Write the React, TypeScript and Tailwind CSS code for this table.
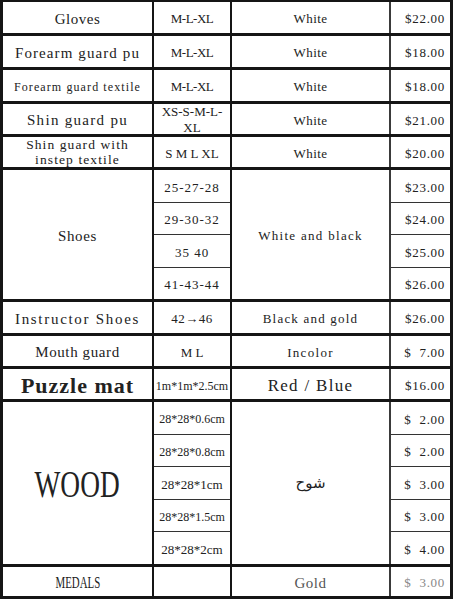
import React from "react";

const serif = "font-['Liberation_Serif','DejaVu_Serif',serif]";

type C = { text: React.ReactNode; cls?: string };

const c1 = "w-[151px] shrink-0 border-r-2 border-[#151515] flex items-center justify-center text-center overflow-hidden";
const c2 = "w-[78px] shrink-0 border-r-2 border-[#151515] flex items-center justify-center text-center overflow-hidden";
const c3 = "w-[159px] shrink-0 border-r-2 border-[#3a3a3a] flex items-center justify-center text-center overflow-hidden";
const c4 = "flex-1 flex items-center justify-end pr-[5px] overflow-hidden";

function Row({ h, a, b, c, d }: { h: string; a: C; b: C; c: C; d: C }) {
  return (
    <div className={`flex ${h} border-b-[3px] border-[#151515]`}>
      <div className={`${c1} ${a.cls ?? "pt-[3px] text-[15px]"}`}>{a.text}</div>
      <div className={`${c2} ${b.cls ?? "pt-[3px] text-[13px]"}`}>{b.text}</div>
      <div className={`${c3} ${c.cls ?? "pt-[3px] text-[13px]"}`}>{c.text}</div>
      <div className={`${c4} ${d.cls ?? "pt-[3px] text-[13px] tracking-[0.7px]"}`}>{d.text}</div>
    </div>
  );
}

function Group({ h, a, b, c, d }: { h: string; a: C; b: C[]; c: C; d: C[] }) {
  return (
    <div className={`flex ${h} border-b-[3px] border-[#151515]`}>
      <div className={`${c1} ${a.cls ?? ""}`}>{a.text}</div>
      <div className="w-[78px] shrink-0 border-r-2 border-[#151515] flex flex-col">
        {b.map((x, i) => (
          <div
            key={i}
            className={`flex-1 flex items-center justify-center whitespace-nowrap pt-[3px] ${i > 0 ? "border-t border-[#333]" : ""} ${x.cls ?? "text-[13px]"}`}
          >
            {x.text}
          </div>
        ))}
      </div>
      <div className={`${c3} ${c.cls ?? ""}`}>{c.text}</div>
      <div className="flex-1 flex flex-col">
        {d.map((x, i) => (
          <div
            key={i}
            className={`flex-1 flex items-center justify-end pr-[5px] pt-[3px] whitespace-pre ${i > 0 ? "border-t border-[#333]" : ""} ${x.cls ?? "text-[13px] tracking-[0.7px]"}`}
          >
            {x.text}
          </div>
        ))}
      </div>
    </div>
  );
}

export default function App() {
  return (
    <div className={`w-[455px] h-[600px] bg-white text-[#222] ${serif}`}>
      <div className="w-[453px] border-l-[3px] border-r-[3px] border-t-2 border-[#151515]">
        <Row
          h="h-[34px]"
          a={{ text: "Gloves", cls: "pt-[3px] text-[15px] tracking-[0.5px]" }}
          b={{ text: "M-L-XL", cls: "pt-[3px] text-[13px] tracking-[-0.5px]" }}
          c={{ text: "White", cls: "pt-[3px] text-[13px] tracking-[0.4px]" }}
          d={{ text: "$22.00" }}
        />
        <Row
          h="h-[34px]"
          a={{ text: "Forearm guard pu", cls: "pt-[3px] text-[15px] tracking-[1.1px]" }}
          b={{ text: "M-L-XL", cls: "pt-[3px] text-[13px] tracking-[-0.5px]" }}
          c={{ text: "White", cls: "pt-[3px] text-[13px] tracking-[0.4px]" }}
          d={{ text: "$18.00" }}
        />
        <Row
          h="h-[34px]"
          a={{ text: "Forearm guard textile", cls: "pt-[3px] text-[12px] tracking-[1.1px] whitespace-nowrap" }}
          b={{ text: "M-L-XL", cls: "pt-[3px] text-[13px] tracking-[-0.5px]" }}
          c={{ text: "White", cls: "pt-[3px] text-[13px] tracking-[0.4px]" }}
          d={{ text: "$18.00" }}
        />
        <Row
          h="h-[33px]"
          a={{ text: "Shin guard pu", cls: "pt-[3px] text-[15px] tracking-[1.3px]" }}
          b={{
            text: (
              <span>
                XS-S-M-L-
                <br />
                XL
              </span>
            ),
            cls: "pt-[1px] text-[13px] leading-[16px]",
          }}
          c={{ text: "White", cls: "pt-[3px] text-[13px] tracking-[0.4px]" }}
          d={{ text: "$21.00" }}
        />
        <Row
          h="h-[33px]"
          a={{
            text: (
              <span>
                Shin guard with
                <br />
                instep textile
              </span>
            ),
            cls: "pt-0 text-[13.5px] leading-[15px] tracking-[1.1px] whitespace-nowrap",
          }}
          b={{ text: "S M L XL", cls: "pt-[3px] text-[13px] whitespace-pre" }}
          c={{ text: "White", cls: "pt-[3px] text-[13px] tracking-[0.4px]" }}
          d={{ text: "$20.00" }}
        />
        <Group
          h="h-[132px]"
          a={{ text: "Shoes", cls: "pt-[3px] text-[15px] tracking-[0.6px]" }}
          b={[
            { text: "25-27-28", cls: "text-[13px] tracking-[1px]" },
            { text: "29-30-32", cls: "text-[13px] tracking-[1px]" },
            { text: "35 40", cls: "text-[13px] tracking-[1px] whitespace-pre" },
            { text: "41-43-44", cls: "text-[13px] tracking-[1px]" },
          ]}
          c={{ text: "White and black", cls: "pt-[3px] text-[13px] tracking-[1.3px] whitespace-nowrap" }}
          d={[{ text: "$23.00" }, { text: "$24.00" }, { text: "$25.00" }, { text: "$26.00" }]}
        />
        <Row
          h="h-[34px]"
          a={{ text: "Instructor Shoes", cls: "pt-[3px] text-[15px] tracking-[1.7px] whitespace-nowrap" }}
          b={{ text: "42→46", cls: "pt-[3px] text-[13px] tracking-[0.5px]" }}
          c={{ text: "Black and gold", cls: "pt-[3px] text-[13px] tracking-[1.2px] whitespace-nowrap" }}
          d={{ text: "$26.00" }}
        />
        <Row
          h="h-[33px]"
          a={{ text: "Mouth guard", cls: "pt-[3px] text-[15px] tracking-[0.6px]" }}
          b={{ text: "M L", cls: "pt-[3px] text-[13px] whitespace-pre" }}
          c={{ text: "Incolor", cls: "pt-[3px] text-[13px] tracking-[1.3px]" }}
          d={{ text: "$  7.00", cls: "pt-[3px] text-[13px] tracking-[0.7px] whitespace-pre" }}
        />
        <Row
          h="h-[33px]"
          a={{ text: "Puzzle mat", cls: "pt-[2px] text-[22px] font-bold tracking-[1px]" }}
          b={{ text: "1m*1m*2.5cm", cls: "pt-[3px] text-[12px] whitespace-nowrap" }}
          c={{ text: "Red / Blue", cls: "pt-[3px] text-[17px] tracking-[1.3px] whitespace-pre" }}
          d={{ text: "$16.00" }}
        />
        <Group
          h="h-[165px]"
          a={{
            text: <span className="inline-block scale-x-[0.72]">WOOD</span>,
            cls: "pt-[2px] text-[38px]",
          }}
          b={[
            { text: "28*28*0.6cm", cls: "text-[12px]" },
            { text: "28*28*0.8cm", cls: "text-[12px]" },
            { text: "28*28*1cm", cls: "text-[13px]" },
            { text: "28*28*1.5cm", cls: "text-[12px]" },
            { text: "28*28*2cm", cls: "text-[13px]" },
          ]}
          c={{ text: "شوح", cls: "text-[15px] font-['DejaVu_Sans',sans-serif]" }}
          d={[
            { text: "$  2.00" },
            { text: "$  2.00" },
            { text: "$  3.00" },
            { text: "$  3.00" },
            { text: "$  4.00" },
          ]}
        />
        <Row
          h="h-[32px]"
          a={{ text: <span className="inline-block scale-x-[0.68]">MEDALS</span>, cls: "pt-[3px] text-[16px]" }}
          b={{ text: "" }}
          c={{ text: "Gold", cls: "pt-[3px] text-[15px] tracking-[0.5px] text-[#555]" }}
          d={{ text: "$  3.00", cls: "pt-[3px] text-[13px] tracking-[0.7px] whitespace-pre text-[#888]" }}
        />
      </div>
    </div>
  );
}
